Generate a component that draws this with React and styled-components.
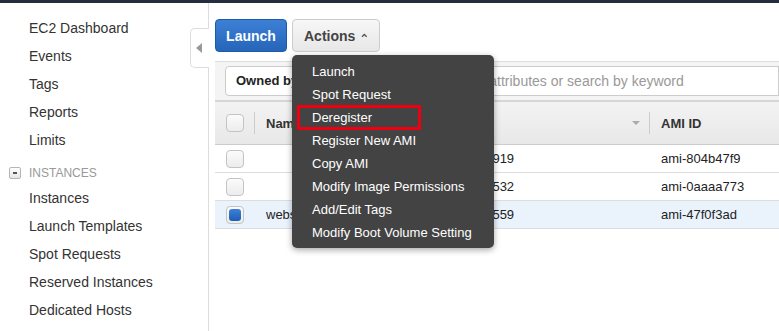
import React from 'react';
import styled, { createGlobalStyle } from 'styled-components';

const GlobalStyle = createGlobalStyle`
  html, body {
    margin: 0;
    padding: 0;
    background: #ffffff;
    font-family: "Liberation Sans", Arial, sans-serif;
    overflow: hidden;
  }
`;

const navTop = ['EC2 Dashboard', 'Events', 'Tags', 'Reports', 'Limits'];
const navInstances = [
  'Instances',
  'Launch Templates',
  'Spot Requests',
  'Reserved Instances',
  'Dedicated Hosts',
];

const menuItems = [
  'Launch',
  'Spot Request',
  'Deregister',
  'Register New AMI',
  'Copy AMI',
  'Modify Image Permissions',
  'Add/Edit Tags',
  'Modify Boot Volume Setting',
];

const rows = [
  { name: '', source: 'website-919', id: 'ami-804b47f9', selected: false },
  { name: '', source: 'website-532', id: 'ami-0aaaa773', selected: false },
  { name: 'website', source: 'website-559', id: 'ami-47f0f3ad', selected: true },
];

const App = () => {
  return (
    <>
      <GlobalStyle />
      <TopBar />
      <Layout>
        <Sidebar>
          {navTop.map((item) => (
            <NavItem key={item}>{item}</NavItem>
          ))}
          <GroupHeader>
            <CollapseBox />
            INSTANCES
          </GroupHeader>
          {navInstances.map((item) => (
            <NavItem key={item}>{item}</NavItem>
          ))}
          <CollapseTab>
            <TabArrow />
          </CollapseTab>
        </Sidebar>

        <Main>
          <Toolbar>
            <LaunchButton>Launch</LaunchButton>
            <ActionsWrap>
              <ActionsButton>
                Actions
                <svg width="10" height="7" viewBox="0 0 10 7">
                  <polyline
                    points="1.5,5.5 5,2 8.5,5.5"
                    fill="none"
                    stroke="#555"
                    strokeWidth="2"
                  />
                </svg>
              </ActionsButton>
              <Menu>
                {menuItems.map((item) => (
                  <MenuItem key={item} $marked={item === 'Deregister'}>
                    {item}
                  </MenuItem>
                ))}
              </Menu>
            </ActionsWrap>
          </Toolbar>

          <Panel>
            <FilterBar>
              <OwnedButton>Owned by me</OwnedButton>
              <SearchInput>
                Filter by tags and attributes or search by keyword
              </SearchInput>
            </FilterBar>

            <HeaderRow>
              <CheckCell>
                <Checkbox />
                <Divider />
              </CheckCell>
              <NameCell>
                <HeadText>Name</HeadText>
              </NameCell>
              <SourceCell>
                <HeadText>Source</HeadText>
                <SortCaret />
                <Divider />
              </SourceCell>
              <IdCell>
                <HeadText>AMI ID</HeadText>
              </IdCell>
            </HeaderRow>

            {rows.map((row) => (
              <Row key={row.id} $selected={row.selected}>
                <CheckCell>
                  <Checkbox $checked={row.selected} />
                </CheckCell>
                <NameCell>{row.name}</NameCell>
                <SourceCell>{row.source}</SourceCell>
                <IdCell>{row.id}</IdCell>
              </Row>
            ))}
          </Panel>
        </Main>
      </Layout>
    </>
  );
};

const TopBar = styled.div`
  height: 3px;
  background: #232f3e;
`;

const Layout = styled.div`
  display: flex;
  height: 328px;
`;

const Sidebar = styled.nav`
  position: relative;
  flex: 0 0 209px;
  box-sizing: border-box;
  padding-top: 11px;
  border-right: 1px solid #dddddd;
`;

const NavItem = styled.div`
  height: 28px;
  line-height: 28px;
  padding-left: 29px;
  font-size: 14px;
  color: #333333;
  white-space: nowrap;
`;

const GroupHeader = styled.div`
  display: flex;
  align-items: center;
  height: 30px;
  padding-top: 8px;
  box-sizing: border-box;
  padding-left: 9px;
  gap: 8px;
  font-size: 12px;
  color: #999999;
`;

const CollapseBox = styled.span`
  position: relative;
  width: 10px;
  height: 10px;
  border: 1px solid #b5b5b5;
  border-radius: 2px;
  background: linear-gradient(#ffffff, #e6e6e6);

  &::after {
    content: '';
    position: absolute;
    left: 3px;
    top: 4px;
    width: 4px;
    height: 2px;
    background: #555555;
  }
`;

const CollapseTab = styled.div`
  position: absolute;
  right: -1px;
  top: 25px;
  width: 19px;
  height: 40px;
  box-sizing: border-box;
  background: #ffffff;
  border: 1px solid #dddddd;
  border-right: none;
  border-radius: 5px 0 0 5px;
  display: flex;
  align-items: center;
  justify-content: center;
`;

const TabArrow = styled.span`
  width: 0;
  height: 0;
  border-top: 5px solid transparent;
  border-bottom: 5px solid transparent;
  border-right: 6px solid #999999;
  margin-right: 2px;
`;

const Main = styled.main`
  flex: 1;
  min-width: 0;
  padding: 16px 0 0 6px;
`;

const Toolbar = styled.div`
  display: flex;
  gap: 5px;
`;

const BaseButton = styled.button`
  height: 33px;
  box-sizing: border-box;
  padding: 0 11px;
  border-radius: 4px;
  font-family: inherit;
  font-size: 14px;
  font-weight: bold;
  display: flex;
  align-items: center;
  gap: 6px;
`;

const LaunchButton = styled(BaseButton)`
  width: 72px;
  justify-content: center;
  color: #ffffff;
  background: linear-gradient(#3c80d5, #2565ba);
  border: 1px solid #1e5aa8;
`;

const ActionsWrap = styled.div`
  position: relative;
`;

const ActionsButton = styled(BaseButton)`
  width: 88px;
  color: #444444;
  background: linear-gradient(#f7f7f7, #e7e7e7);
  border: 1px solid #cccccc;
`;

const Menu = styled.div`
  position: absolute;
  left: 0;
  top: 36px;
  z-index: 5;
  width: 202px;
  box-sizing: border-box;
  padding: 5px 0 4px;
  background: #434343;
  border-radius: 5px;
  box-shadow: 0 2px 6px rgba(0, 0, 0, 0.35);
`;

const MenuItem = styled.div`
  position: relative;
  height: 23px;
  line-height: 23px;
  padding-left: 20px;
  font-size: 13px;
  color: #ffffff;
  white-space: nowrap;

  ${({ $marked }) =>
    $marked &&
    `
    &::after {
      content: '';
      position: absolute;
      left: 5px;
      top: -1px;
      width: 124px;
      height: 25px;
      box-sizing: border-box;
      border: 3px solid #ee0010;
    }
  `}
`;

const Panel = styled.section`
  margin-top: 9px;
`;

const FilterBar = styled.div`
  display: flex;
  align-items: center;
  height: 41px;
  box-sizing: border-box;
  padding: 0 0 0 10px;
  background: #f4f4f4;
  border-top: 1px solid #dddddd;
  border-bottom: 2px solid #d6d6d6;
`;

const OwnedButton = styled.div`
  flex: 0 0 130px;
  height: 30px;
  box-sizing: border-box;
  padding-left: 10px;
  line-height: 28px;
  font-size: 13px;
  font-weight: bold;
  color: #222222;
  background: #ffffff;
  border: 1px solid #cccccc;
  border-radius: 4px 0 0 4px;
`;

const SearchInput = styled.div`
  flex: 1;
  height: 30px;
  box-sizing: border-box;
  padding-left: 23px;
  line-height: 28px;
  font-size: 14px;
  color: #999999;
  white-space: nowrap;
  background: #ffffff;
  border: 1px solid #cccccc;
  border-left: none;
`;

const HeaderRow = styled.div`
  display: flex;
  align-items: center;
  height: 43px;
  box-sizing: border-box;
  background: linear-gradient(#f3f3f3, #e8e8e8);
  border-bottom: 1px solid #cccccc;
`;

const Row = styled.div`
  display: flex;
  align-items: center;
  height: 28px;
  box-sizing: border-box;
  font-size: 13px;
  color: #222222;
  background: ${({ $selected }) => ($selected ? '#eaf2fc' : '#ffffff')};
  border-bottom: 1px solid #dddddd;
`;

const Cell = styled.div`
  display: flex;
  align-items: center;
  height: 100%;
  box-sizing: border-box;
  white-space: nowrap;
`;

const CheckCell = styled(Cell)`
  flex: 0 0 40px;
  padding-left: 11px;
  gap: 10px;
`;

const NameCell = styled(Cell)`
  flex: 0 0 180px;
  padding-left: 11px;
`;

const SourceCell = styled(Cell)`
  flex: 0 0 215px;
  padding-left: 9px;
`;

const IdCell = styled(Cell)`
  flex: 1;
  padding-left: 11px;
`;

const HeadText = styled.span`
  font-size: 13px;
  font-weight: bold;
  color: #333333;
`;

const Divider = styled.span`
  width: 1px;
  height: 22px;
  background: #cccccc;
`;

const SortCaret = styled.span`
  margin-left: auto;
  margin-right: 9px;
  width: 0;
  height: 0;
  border-left: 4px solid transparent;
  border-right: 4px solid transparent;
  border-top: 4px solid #aaaaaa;
`;

const Checkbox = styled.span`
  position: relative;
  flex: 0 0 auto;
  width: 18px;
  height: 18px;
  box-sizing: border-box;
  border: 1px solid #c4c4c4;
  border-radius: 4px;
  background: linear-gradient(#fbfbfb, #ececec);

  ${({ $checked }) =>
    $checked &&
    `
    &::after {
      content: '';
      position: absolute;
      inset: 2px;
      border-radius: 3px;
      background: linear-gradient(#3d7fd6, #1f5eb8);
    }
  `}
`;

export default App;
